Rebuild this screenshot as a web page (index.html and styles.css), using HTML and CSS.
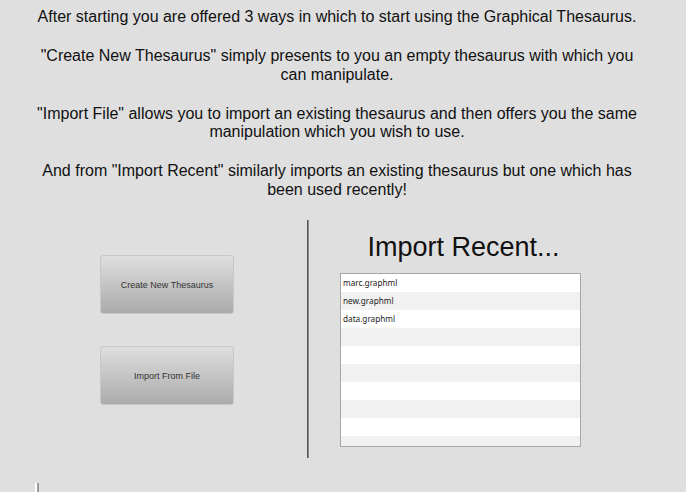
FILE: index.html
```html
<!DOCTYPE html>
<html lang="en">
<head>
<meta charset="utf-8">
<title>Graphical Thesaurus</title>
<link rel="stylesheet" href="styles.css">
</head>
<body>
<div class="page">
  <div class="intro">
    <p>After starting you are offered 3 ways in which to start using the Graphical Thesaurus.</p>
    <p>"Create New Thesaurus" simply presents to you an empty thesaurus with which you can manipulate.</p>
    <p>"Import File" allows you to import an existing thesaurus and then offers you the same manipulation which you wish to use.</p>
    <p>And from "Import Recent" similarly imports an existing thesaurus but one which has been used recently!</p>
  </div>
  <div class="main">
    <div class="actions">
      <button class="btn">Create New Thesaurus</button>
      <button class="btn">Import From File</button>
    </div>
    <div class="divider"></div>
    <div class="recent">
      <h1 class="recent-title">Import Recent...</h1>
      <ul class="recent-list">
        <li class="row">marc.graphml</li>
        <li class="row">new.graphml</li>
        <li class="row">data.graphml</li>
        <li class="row"></li>
        <li class="row"></li>
        <li class="row"></li>
        <li class="row"></li>
        <li class="row"></li>
        <li class="row"></li>
        <li class="row"></li>
      </ul>
    </div>
  </div>
  <div class="stub"></div>
</div>
</body>
</html>
```
FILE: styles.css
```css
html {
  overflow: hidden;
}
body {
  margin: 0;
  background: #dfdfdf;
  font-family: "Liberation Sans", Arial, sans-serif;
  color: #111;
}
.page {
  padding: 8px 12px 0 0;
}
.intro {
  max-width: 612px;
  margin: 0 auto;
  text-align: center;
  font-size: 16px;
  line-height: 18.5px;
}
.intro p {
  margin: 0 0 20.5px;
}
.intro p:last-child {
  margin-bottom: 0;
}
.main {
  display: flex;
  margin-top: 21px;
  height: 238px;
}
.actions {
  width: 134px;
  padding: 35px 73px 0 100px;
  display: flex;
  flex-direction: column;
  gap: 32px;
}
.btn {
  height: 59px;
  width: 134px;
  border: 1px solid #c8c8c8;
  border-radius: 3px;
  background: linear-gradient(#dedede, #ababab);
  font-family: "Liberation Sans", Arial, sans-serif;
  font-size: 9px;
  color: #333;
  padding: 0;
}
.divider {
  width: 2px;
  background: linear-gradient(90deg, #555 0, #555 50%, #8a8a8a 50%);
}
.recent {
  padding-left: 31px;
  width: 241px;
  display: flex;
  flex-direction: column;
}
.recent-title {
  margin: 12px 0 0 6px;
  text-align: center;
  font-weight: normal;
  font-size: 27px;
  line-height: 31px;
  color: #111;
}
.recent-list {
  list-style: none;
  margin: 10px 0 0;
  padding: 0;
  height: 172px;
  overflow: hidden;
  border: 1px solid #a6a6a6;
  background: #fff;
}
.row {
  height: 18px;
  line-height: 18px;
  padding-left: 2px;
  font-family: "Noto Sans", "DejaVu Sans", sans-serif;
  font-size: 8.2px;
  color: #222;
}
.row:nth-child(even) {
  background: #f1f1f1;
}
.stub {
  margin: 25px 0 0 35px;
  width: 4px;
  height: 12px;
  background: linear-gradient(90deg, #fff 0, #fff 60%, #9a9a9a 60%);
}
```
